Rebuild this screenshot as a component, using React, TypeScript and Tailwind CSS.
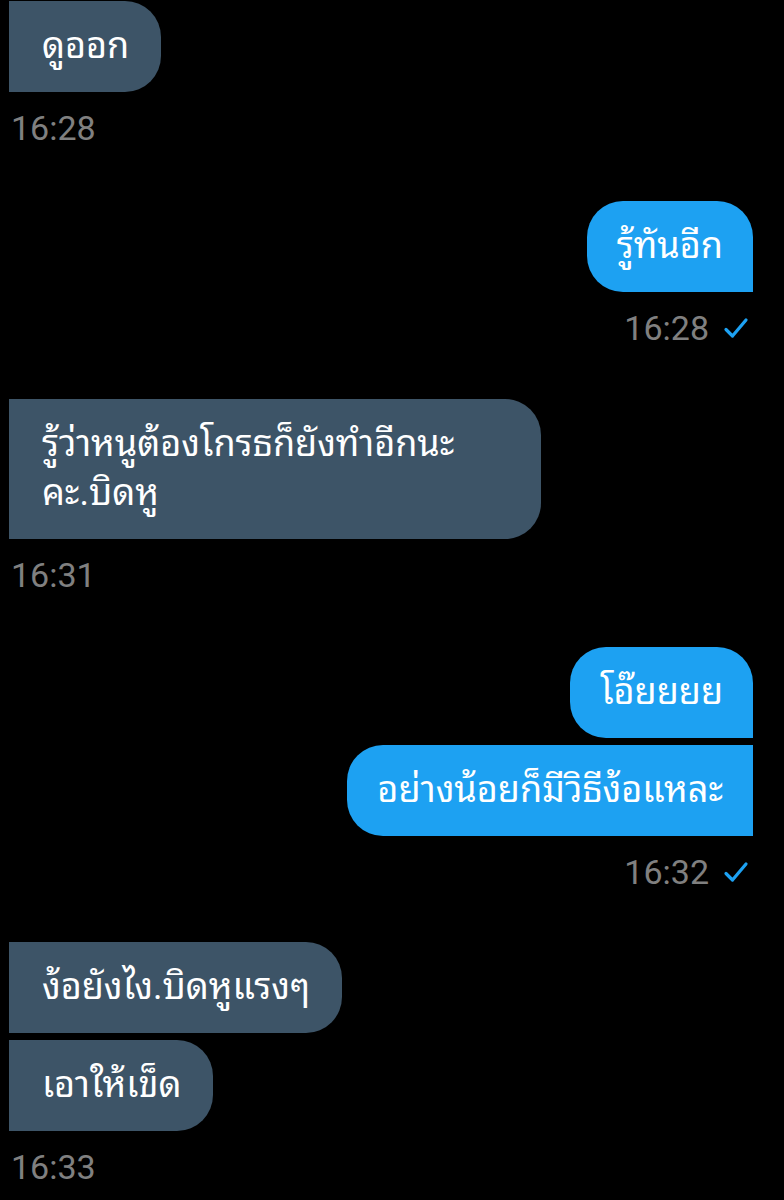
const FONT = "font-['Roboto','Noto_Sans_Thai_Looped','Loma','Garuda','Noto_Sans_Thai','Noto_Sans',sans-serif]";

const Check = () => (
  <svg width="26" height="22" viewBox="0 0 26 22" fill="none" className="ml-[14px]">
    <path d="M3 12.5 L9.5 19 L23 3" stroke="#1da1f2" strokeWidth="3.2" strokeLinecap="round" strokeLinejoin="round" />
  </svg>
);

const Received = ({ children, className = '' }: { children: React.ReactNode; className?: string }) => (
  <div
    className={`self-start bg-[#3d5467] text-white text-[36px] leading-[49px] py-[21px] pl-[33px] pr-[32px] rounded-r-[36px] ${className}`}
  >
    {children}
  </div>
);

const Sent = ({ children, className = '' }: { children: React.ReactNode; className?: string }) => (
  <div
    className={`self-end bg-[#1da1f2] text-white text-[36px] leading-[49px] py-[21px] px-[30px] ${className}`}
  >
    {children}
  </div>
);

const Time = ({ value, sent }: { value: string; sent?: boolean }) => (
  <div
    className={`mt-4 flex items-center text-[34px] leading-[40px] text-[#808080] ${
      sent ? 'self-end pr-[4px]' : 'self-start pl-[2px]'
    }`}
  >
    <span>{value}</span>
    {sent && <Check />}
  </div>
);

export default function App() {
  return (
    <div className={`w-[784px] h-[1200px] overflow-hidden bg-black ${FONT}`}>
      <div className="flex flex-col pl-[9px] pr-[31px] pt-[1px]">
        <Received>ดูออก</Received>
        <Time value="16:28" />

        <Sent className="mt-[53px] rounded-l-[36px] rounded-tr-[36px]">รู้ทันอีก</Sent>
        <Time value="16:28" sent />

        <Received className="mt-[51px] w-[532px]">
          รู้ว่าหนูต้องโกรธก็ยังทำอีกนะ
          <br />
          คะ.บิดหู
        </Received>
        <Time value="16:31" />

        <div className="mt-[52px] flex flex-col gap-[7px]">
          <Sent className="rounded-l-[36px] rounded-tr-[36px]">โอ๊ยยยย</Sent>
          <Sent className="rounded-l-[36px]">อย่างน้อยก็มีวิธีง้อแหละ</Sent>
        </div>
        <Time value="16:32" sent />

        <div className="mt-[50px] flex flex-col gap-[7px]">
          <Received>ง้อยังไง.บิดหูแรงๆ</Received>
          <Received>เอาให้เข็ด</Received>
        </div>
        <Time value="16:33" />
      </div>
    </div>
  );
}
